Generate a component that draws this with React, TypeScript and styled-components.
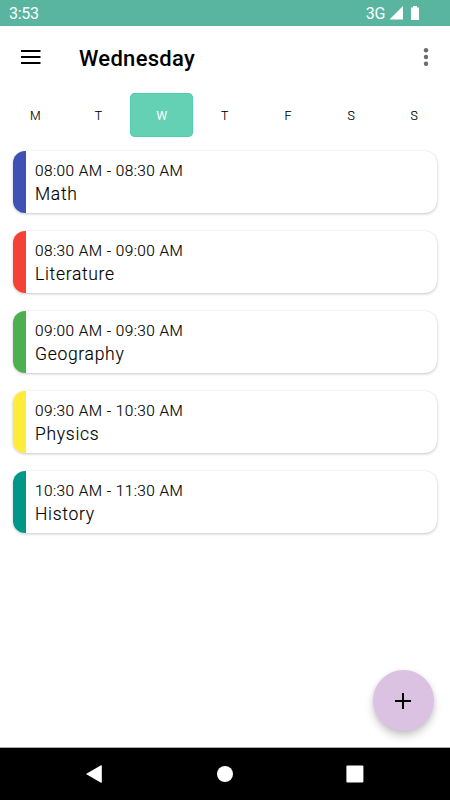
import React from "react";
import styled, { createGlobalStyle } from "styled-components";

const GlobalStyle = createGlobalStyle`
  * { box-sizing: border-box; }
  html, body { margin: 0; padding: 0; }
  body { font-family: Roboto, sans-serif; background: #fff; color: #000; overflow: hidden; }
  button { font: inherit; border: 0; padding: 0; background: none; color: inherit; }
  svg { display: block; }
`;

const Screen = styled.div`
  width: 450px;
  height: 800px;
  display: flex;
  flex-direction: column;
  position: relative;
  background: #fff;
`;

const StatusBar = styled.header`
  height: 26px;
  flex: none;
  display: flex;
  align-items: center;
  justify-content: space-between;
  padding: 2px 30px 0 9px;
  background: #59b59f;
  color: #fff;
  font-size: 16px;
  line-height: 24px;
`;

const Clock = styled.span`
  letter-spacing: -0.3px;
`;

const StatusIcons = styled.div`
  display: flex;
  align-items: center;
`;

const Network = styled.span`
  font-size: 16px;
  letter-spacing: -0.3px;
  margin-right: 4px;
`;

const AppBar = styled.div`
  height: 64px;
  flex: none;
  display: flex;
  align-items: center;
  padding: 0 20px 2px 20px;
`;

const Title = styled.h1`
  flex: 1;
  margin: 3px 0 0 38px;
  font-size: 22px;
  font-weight: 500;
  line-height: 28px;
  letter-spacing: 0.3px;
`;

const Days = styled.nav`
  flex: none;
  display: grid;
  grid-template-columns: repeat(7, 1fr);
  height: 44px;
  margin: 3px 4px 0 4px;
`;

const Day = styled.button<{ $active: boolean }>`
  border-radius: 5px;
  padding: 1px 0 0;
  font-size: 12.3px;
  font-weight: ${(p) => (p.$active ? 400 : 300)};
  letter-spacing: 0.5px;
  color: ${(p) => (p.$active ? "#fff" : "#000")};
  -webkit-text-stroke: ${(p) => (p.$active ? "0" : "0.15px #000")};
  background: ${(p) => (p.$active ? "#64d1b5" : "transparent")};
  box-shadow: ${(p) => (p.$active ? "inset 0 0 0 1px #4fceb0" : "none")};
`;

const Lessons = styled.main`
  flex: 1;
  display: flex;
  flex-direction: column;
  gap: 18px;
  padding: 14px 13px 0 13px;
`;

const Lesson = styled.article`
  height: 62px;
  flex: none;
  display: flex;
  overflow: hidden;
  border-radius: 12px;
  background: #fff;
  box-shadow: 0 1px 3px rgba(0, 0, 0, 0.22), 0 0 1px rgba(0, 0, 0, 0.12);
`;

const Stripe = styled.div<{ $color: string }>`
  width: 13px;
  background: ${(p) => p.$color};
`;

const Details = styled.div`
  padding: 10px 0 0 9px;
  -webkit-text-stroke: 0.15px #000;
`;

const Time = styled.div`
  font-size: 15.4px;
  font-weight: 300;
  line-height: 20px;
  letter-spacing: 0.43px;
`;

const Subject = styled.div`
  margin-top: 2px;
  font-size: 17.5px;
  font-weight: 300;
  line-height: 22px;
  letter-spacing: 0.7px;
`;

const AddButton = styled.button`
  position: absolute;
  right: 16px;
  bottom: 69px;
  width: 61px;
  height: 61px;
  padding-right: 1px;
  display: grid;
  place-items: center;
  border-radius: 50%;
  background: #dbc2e2;
  box-shadow: 0 5px 9px rgba(0, 0, 0, 0.2), 0 1px 4px rgba(0, 0, 0, 0.08);
`;

const SystemNav = styled.footer`
  height: 53px;
  flex: none;
  display: flex;
  align-items: center;
  justify-content: space-between;
  padding: 0 86px 1px 84px;
  border-top: 1px solid #aaa;
  background: #000;
`;

const days = ["M", "T", "W", "T", "F", "S", "S"];

const lessons = [
  { time: "08:00 AM - 08:30 AM", subject: "Math", color: "#3f51b5" },
  { time: "08:30 AM - 09:00 AM", subject: "Literature", color: "#f44336" },
  { time: "09:00 AM - 09:30 AM", subject: "Geography", color: "#4caf50" },
  { time: "09:30 AM - 10:30 AM", subject: "Physics", color: "#ffeb3b" },
  { time: "10:30 AM - 11:30 AM", subject: "History", color: "#009688" },
];

export default function App() {
  return (
    <>
      <GlobalStyle />
      <Screen>
        <StatusBar>
          <Clock>3:53</Clock>
          <StatusIcons>
            <Network>3G</Network>
            <svg width="31" height="16" viewBox="0 0 31 16" fill="#fff">
              <path d="M14 0v13.5H.5z" />
              <path d="M24 0h4v1.5h2V14h-8V1.5h2z" />
            </svg>
          </StatusIcons>
        </StatusBar>
        <AppBar>
          <svg width="21" height="14" viewBox="0 0 21 14" fill="#000">
            <path d="M1 0h19.5v2H1zM1 6h19.5v2H1zM1 12h19.5v2H1z" />
          </svg>
          <Title>Wednesday</Title>
          <svg width="8" height="18" viewBox="0 0 8 18" fill="#6b6b6b">
            <circle cx="4" cy="2.3" r="2.2" />
            <circle cx="4" cy="9" r="2.2" />
            <circle cx="4" cy="15.7" r="2.2" />
          </svg>
        </AppBar>
        <Days>
          {days.map((d, i) => (
            <Day key={i} $active={i === 2}>
              {d}
            </Day>
          ))}
        </Days>
        <Lessons>
          {lessons.map((l) => (
            <Lesson key={l.subject}>
              <Stripe $color={l.color} />
              <Details>
                <Time>{l.time}</Time>
                <Subject>{l.subject}</Subject>
              </Details>
            </Lesson>
          ))}
        </Lessons>
        <AddButton aria-label="Add lesson">
          <svg width="16" height="16" viewBox="0 0 16 16" fill="#000">
            <path d="M7 0h2V7h7v2H9v7H7V9H0V7h7z" />
          </svg>
        </AddButton>
        <SystemNav>
          <svg width="20" height="20" viewBox="0 0 20 20" fill="#fff">
            <path d="M2 10 17 1.3q.8-.3.8.6v16.4q0 .7-.8.4z" />
          </svg>
          <svg width="18" height="18" viewBox="0 0 18 18" fill="#fff">
            <circle cx="9" cy="9" r="8" />
          </svg>
          <svg width="18" height="18" viewBox="0 0 18 18" fill="#fff">
            <rect x=".4" y=".4" width="17" height="17" rx="1" />
          </svg>
        </SystemNav>
      </Screen>
    </>
  );
}
